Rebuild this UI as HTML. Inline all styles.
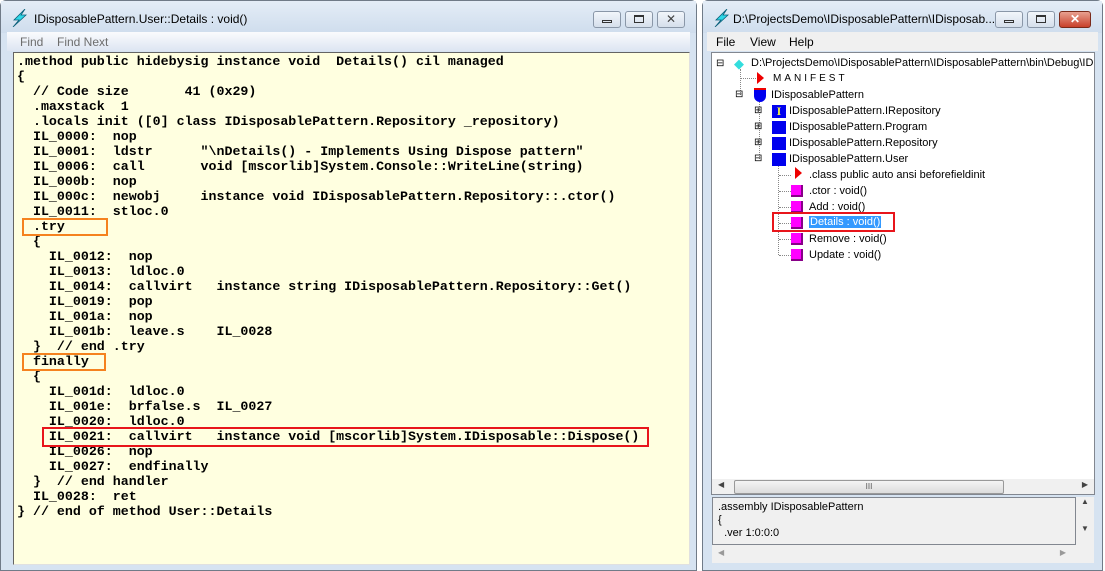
<!DOCTYPE html><html><head><style>
body{margin:0;width:1105px;height:571px;background:#fff;position:relative;overflow:hidden;font-family:"Liberation Sans",sans-serif}
.win{position:absolute;top:0;background:#d6e3f1;border:1px solid #707b88;border-radius:6px 6px 0 0;box-sizing:border-box}
.tb{position:absolute;left:0;right:0;top:0;height:32px;background:linear-gradient(#e4edf7,#cfdded)}
.title{position:absolute;top:11px;left:32px;font-size:12px;color:#000}
.bolt{position:absolute;left:10px;top:8px;width:16px;height:18px}
.btn{position:absolute;top:10px;width:28px;height:17px;border:1px solid #8a97a8;border-radius:3px;background:linear-gradient(#f2f6fb,#d5dfeb);box-sizing:border-box}
.menu{position:absolute;left:6px;right:6px;top:31px;height:19px;background:linear-gradient(#fafbfd,#dde5f2);font-size:12px}
.menu span{position:absolute;top:3px}
pre{margin:0;font-family:"Liberation Mono",monospace;font-weight:bold;font-size:13.3px;line-height:15px;color:#000}
.box{position:absolute;border:2px solid}
.tree div{position:absolute;font-size:11px;white-space:nowrap}
.sq{position:absolute;width:10px;height:10px;background:#f0f;border-right:2px solid #808;border-bottom:2px solid #808}
.blk{position:absolute;width:14px;height:13px;background:#00e}
.tri{position:absolute;width:0;height:0;border-left:7px solid #e00;border-top:6px solid transparent;border-bottom:6px solid transparent}
.dl{position:absolute;border-left:1px dotted #888}
.dh{position:absolute;border-top:1px dotted #888}
</style></head><body>
<div class="win" style="left:0;width:697px;height:571px">
<div class="tb"></div>
<svg class="bolt" viewBox="0 0 16 18"><path d="M14 0L3 11h5L2 18 15 6h-5z" fill="#2ed8e8" stroke="#0a5f7a" stroke-width=".8"/></svg>
<div class="title" style="left:33px">IDisposablePattern.User::Details : void()</div>
<div class="btn" style="left:592px"><div style="position:absolute;left:8px;top:8px;width:10px;height:3px;border:1px solid #333;box-sizing:border-box"></div></div>
<div class="btn" style="left:624px"><div style="position:absolute;left:8px;top:3px;width:10px;height:8px;border:1px solid #333;border-top-width:2px;box-sizing:border-box"></div></div>
<div class="btn" style="left:656px;font-size:12px;text-align:center;line-height:15px;color:#444">✕</div>
<div class="menu" style="color:#6d6d6d"><span style="left:13px">Find</span><span style="left:50px">Find Next</span></div>
<div style="position:absolute;left:12px;top:51px;width:677px;height:513px;background:#ffffe0;border:1px solid #e0e0e0;border-left-color:#646464;border-top-color:#646464;box-sizing:border-box;overflow:hidden">
<pre style="position:absolute;left:3px;top:1px">.method public hidebysig instance void  Details() cil managed
{
  // Code size       41 (0x29)
  .maxstack  1
  .locals init ([0] class IDisposablePattern.Repository _repository)
  IL_0000:  nop
  IL_0001:  ldstr      "\nDetails() - Implements Using Dispose pattern"
  IL_0006:  call       void [mscorlib]System.Console::WriteLine(string)
  IL_000b:  nop
  IL_000c:  newobj     instance void IDisposablePattern.Repository::.ctor()
  IL_0011:  stloc.0
  .try
  {
    IL_0012:  nop
    IL_0013:  ldloc.0
    IL_0014:  callvirt   instance string IDisposablePattern.Repository::Get()
    IL_0019:  pop
    IL_001a:  nop
    IL_001b:  leave.s    IL_0028
  }  // end .try
  finally
  {
    IL_001d:  ldloc.0
    IL_001e:  brfalse.s  IL_0027
    IL_0020:  ldloc.0
    IL_0021:  callvirt   instance void [mscorlib]System.IDisposable::Dispose()
    IL_0026:  nop
    IL_0027:  endfinally
  }  // end handler
  IL_0028:  ret
} // end of method User::Details</pre>
</div>
</div>
<div class="box" style="left:22px;top:218px;width:82px;height:14px;border-color:#f5821f"></div>
<div class="box" style="left:22px;top:353px;width:80px;height:14px;border-color:#f5821f"></div>
<div class="box" style="left:42px;top:427px;width:603px;height:16px;border-color:#e8151b"></div>

<div class="win" style="left:702px;width:401px;height:571px">
<div class="tb"></div>
<svg class="bolt" viewBox="0 0 16 18"><path d="M14 0L3 11h5L2 18 15 6h-5z" fill="#2ed8e8" stroke="#0a5f7a" stroke-width=".8"/></svg>
<div class="title" style="left:30px;font-size:12px">D:\ProjectsDemo\IDisposablePattern\IDisposab...</div>
<div class="btn" style="left:292px"><div style="position:absolute;left:8px;top:8px;width:10px;height:3px;border:1px solid #333;box-sizing:border-box"></div></div>
<div class="btn" style="left:324px"><div style="position:absolute;left:8px;top:3px;width:10px;height:8px;border:1px solid #333;border-top-width:2px;box-sizing:border-box"></div></div>
<div class="btn" style="left:356px;width:32px;background:linear-gradient(#e8a090,#c8402a);border-color:#7a2a1a;color:#fff;font-size:12px;text-align:center;line-height:15px;font-weight:bold">✕</div>
<div class="menu" style="left:4px;right:4px;background:#f0f0f0"><span style="left:9px">File</span><span style="left:43px">View</span><span style="left:82px">Help</span></div>
<div style="position:absolute;left:8px;top:51px;width:384px;height:443px;background:#fff;border:1px solid #828790;box-sizing:border-box"></div>
<div style="position:absolute;left:9px;top:478px;width:382px;height:15px;background:#f0f0f0"><div style="position:absolute;left:22px;top:1px;width:268px;height:12px;border:1px solid #999;border-radius:2px;background:linear-gradient(#f4f4f4,#dcdcdc);font-size:8px;text-align:center;line-height:12px;color:#555">III</div><span style="position:absolute;left:6px;top:1px;font-size:8px;color:#444">◀</span><span style="position:absolute;right:6px;top:1px;font-size:8px;color:#444">▶</span></div>
<div style="position:absolute;left:9px;top:496px;width:364px;height:48px;background:#f0f0f0;border:1px solid #828790;box-sizing:border-box;font-size:11px;line-height:13px;padding:3px 0 0 5px">.assembly IDisposablePattern<br>{<br>&nbsp;&nbsp;.ver 1:0:0:0</div>
<div style="position:absolute;left:373px;top:496px;width:18px;height:48px;background:#f0f0f0;font-size:8px;color:#444;text-align:center">▲<br><br><br>▼</div>
<div style="position:absolute;left:9px;top:544px;width:382px;height:18px;background:#f0f0f0"><span style="position:absolute;left:6px;top:3px;font-size:8px;color:#999">◀</span><span style="position:absolute;right:28px;top:3px;font-size:8px;color:#999">▶</span></div>
<div class="tree">
<div class="dl" style="left:37px;top:68px;height:26px"></div>
<div class="dh" style="left:38px;top:77px;width:15px"></div>
<div class="dl" style="left:56px;top:100px;height:58px"></div>
<div class="dl" style="left:75px;top:164px;height:90px"></div>
<div class="dh" style="left:76px;top:174px;width:12px"></div>
<div class="dh" style="left:76px;top:190px;width:12px"></div>
<div class="dh" style="left:76px;top:206px;width:12px"></div>
<div class="dh" style="left:76px;top:222px;width:12px"></div>
<div class="dh" style="left:76px;top:238px;width:12px"></div>
<div class="dh" style="left:76px;top:254px;width:12px"></div>
<div style="left:13px;top:57px;font-size:10px">⊟</div>
<div style="left:31px;top:55px;color:#3dd;font-size:13px">◆</div>
<div style="left:48px;top:56px">D:\ProjectsDemo\IDisposablePattern\IDisposablePattern\bin\Debug\ID</div>
<div class="tri" style="left:54px;top:71px"></div>
<div style="left:70px;top:72px;letter-spacing:3px;font-size:10px">MANIFEST</div>
<div style="left:32px;top:88px;font-size:10px">⊟</div>
<div style="left:51px;top:87px;width:12px;height:12px;background:#00e;border-top:2px solid #e00;border-radius:0 0 6px 6px"></div>
<div style="left:68px;top:88px">IDisposablePattern</div>
<div style="left:51px;top:104px;font-size:10px">⊞</div><div class="blk" style="left:69px;top:104px;color:#ee4;font:bold 12px 'Liberation Serif';text-align:center;line-height:13px">I</div><div style="left:86px;top:104px">IDisposablePattern.IRepository</div>
<div style="left:51px;top:120px;font-size:10px">⊞</div><div class="blk" style="left:69px;top:120px"></div><div style="left:86px;top:120px">IDisposablePattern.Program</div>
<div style="left:51px;top:136px;font-size:10px">⊞</div><div class="blk" style="left:69px;top:136px"></div><div style="left:86px;top:136px">IDisposablePattern.Repository</div>
<div style="left:51px;top:152px;font-size:10px">⊟</div><div class="blk" style="left:69px;top:152px"></div><div style="left:86px;top:152px">IDisposablePattern.User</div>
<div class="tri" style="left:92px;top:166px"></div><div style="left:106px;top:168px">.class public auto ansi beforefieldinit</div>
<div class="sq" style="left:88px;top:184px"></div><div style="left:106px;top:184px">.ctor : void()</div>
<div class="sq" style="left:88px;top:200px"></div><div style="left:106px;top:200px">Add : void()</div>
<div class="sq" style="left:88px;top:216px"></div><div style="left:106px;top:215px;background:#3399ff;color:#fff;padding:0 1px">Details : void()</div>
<div class="sq" style="left:88px;top:232px"></div><div style="left:106px;top:232px">Remove : void()</div>
<div class="sq" style="left:88px;top:248px"></div><div style="left:106px;top:248px">Update : void()</div>
</div>
</div>
<div class="box" style="left:772px;top:212px;width:119px;height:16px;border-color:#e8151b"></div>
</body></html>
